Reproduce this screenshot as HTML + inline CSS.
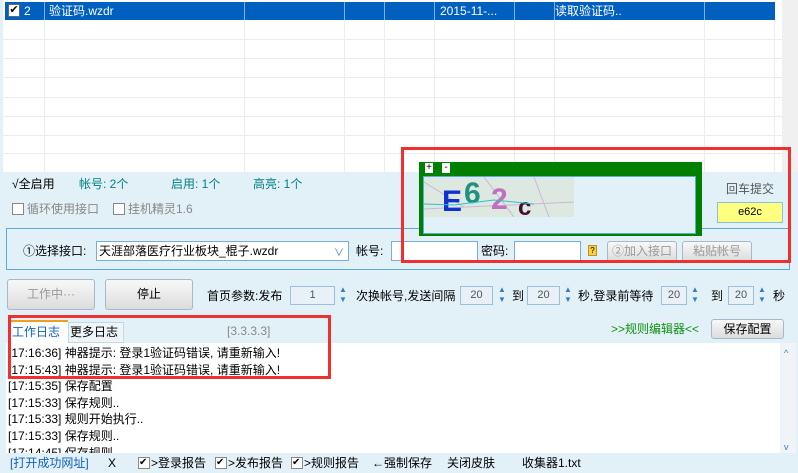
<!DOCTYPE html>
<html><head><meta charset="utf-8"><style>
*{margin:0;padding:0;box-sizing:border-box}
body{width:798px;height:473px;overflow:hidden;background:#e2f0f8;font-family:"Liberation Sans","Noto Sans CJK SC",sans-serif;font-size:12px;color:#000;position:relative}
.a{position:absolute;white-space:nowrap}
.t{font-size:12px;line-height:14px}
.chk{position:absolute;width:12px;height:12px;border:1px solid #888;background:#fff}
.btn{position:absolute;border:1px solid #a8b8c8;border-radius:3px;background:linear-gradient(#f8f8f8,#dcdcdc);text-align:center}
.inp{position:absolute;background:#fff;border:1px solid #7aaed8}
.spin{position:absolute;background:#e8f0f8;border:1px solid #9cc0dc;text-align:center;color:#555;font-size:11px;height:19px;line-height:17px}
.arr{position:absolute;width:10px;height:20px;color:#3a7ac0;font-size:8px;line-height:10px;text-align:center}
</style></head><body>
<!-- table -->
<div class="a" style="left:3px;top:0;width:779px;height:172px;background:#fff"></div>
<div class="a" style="left:5px;top:2px;width:770px;height:18px;background:#0060c0"></div>
<div class="a" style="left:782px;top:0;width:16px;height:172px;background:#f0f0f0"></div>
<div class="a" style="left:8px;top:4px;width:12px;height:13px;background:#fff;border:1px solid #666;font-size:11px;line-height:11px;text-align:center">✔</div>
<div class="a t" style="left:24px;top:4px;color:#fff">2</div>
<div class="a t" style="left:49px;top:4px;color:#fff">验证码.wzdr</div>
<div class="a t" style="left:440px;top:4px;color:#fff">2015-11-...</div>
<div class="a t" style="left:555px;top:4px;color:#fff">读取验证码..</div>
<svg class="a" style="left:0;top:0" width="798" height="172">
<g stroke="#ececec" stroke-width="1">
<line x1="44.5" y1="20" x2="44.5" y2="172"/><line x1="244.5" y1="20" x2="244.5" y2="172"/><line x1="344.5" y1="20" x2="344.5" y2="172"/><line x1="384.5" y1="20" x2="384.5" y2="172"/><line x1="434.5" y1="20" x2="434.5" y2="172"/><line x1="514.5" y1="20" x2="514.5" y2="172"/><line x1="554.5" y1="20" x2="554.5" y2="172"/><line x1="704.5" y1="20" x2="704.5" y2="172"/><line x1="774.5" y1="20" x2="774.5" y2="172"/>
<line x1="3" y1="39.5" x2="782" y2="39.5"/><line x1="3" y1="58.5" x2="782" y2="58.5"/><line x1="3" y1="77.5" x2="782" y2="77.5"/><line x1="3" y1="97.5" x2="782" y2="97.5"/><line x1="3" y1="116.5" x2="782" y2="116.5"/><line x1="3" y1="135.5" x2="782" y2="135.5"/><line x1="3" y1="153.5" x2="782" y2="153.5"/>
</g>
<g stroke="#fff" stroke-opacity=".5"><line x1="244.5" y1="2" x2="244.5" y2="20"/><line x1="344.5" y1="2" x2="344.5" y2="20"/><line x1="384.5" y1="2" x2="384.5" y2="20"/><line x1="434.5" y1="2" x2="434.5" y2="20"/><line x1="514.5" y1="2" x2="514.5" y2="20"/><line x1="554.5" y1="2" x2="554.5" y2="20"/><line x1="704.5" y1="2" x2="704.5" y2="20"/><line x1="44.5" y1="2" x2="44.5" y2="20"/></g>
</svg>
<!-- status -->
<div class="a t" style="left:12px;top:177px">√全启用</div>
<div class="a t" style="left:79px;top:177px;color:#008080">帐号: 2个</div>
<div class="a t" style="left:171px;top:177px;color:#008080">启用: 1个</div>
<div class="a t" style="left:253px;top:177px;color:#008080">高亮: 1个</div>
<div class="chk" style="left:12px;top:203px"></div><div class="a t" style="left:27px;top:202px;color:#888">循环使用接口</div>
<div class="chk" style="left:113px;top:203px"></div><div class="a t" style="left:128px;top:202px;color:#888">挂机精灵1.6</div>
<!-- group box -->
<div class="a" style="left:6px;top:228px;width:784px;height:42px;border:1px solid #5aaadc"></div>
<div class="a t" style="left:23px;top:244px">①选择接口:</div>
<div class="inp" style="left:96px;top:241px;width:253px;height:20px"></div>
<div class="a t" style="left:99px;top:244px">天涯部落医疗行业板块_棍子.wzdr</div>
<div class="a" style="left:334px;top:244px;color:#3a7ac0;font-size:10px">∨</div>
<div class="a t" style="left:356px;top:244px">帐号:</div>
<div class="inp" style="left:391px;top:241px;width:87px;height:20px"></div>
<div class="a t" style="left:481px;top:244px">密码:</div>
<div class="inp" style="left:514px;top:241px;width:67px;height:20px"></div>
<div class="a" style="left:588px;top:245px;width:9px;height:11px;background:#f8d040;border:1px solid #c09020;font-size:8px;line-height:9px;text-align:center">?</div>
<div class="btn t" style="left:607px;top:241px;width:70px;height:21px;line-height:19px;color:#999">②加入接口</div>
<div class="btn t" style="left:682px;top:241px;width:70px;height:21px;line-height:19px;color:#999">粘贴帐号</div>
<!-- captcha -->
<div class="a" style="left:419px;top:162px;width:283px;height:74px;background:#008000"></div>
<div class="a" style="left:425px;top:163px;width:8px;height:10px;background:#fff;font-size:10px;line-height:9px;text-align:center">+</div>
<div class="a" style="left:442px;top:163px;width:8px;height:10px;background:#fff;font-size:10px;line-height:9px;text-align:center">-</div>
<div class="a" style="left:423px;top:176px;width:273px;height:58px;background:#e2f0f8;border:1px solid #5aaadc"></div>
<svg class="a" style="left:424px;top:177px" width="150" height="40">
<rect width="150" height="40" fill="#dde8e0"/>
<path d="M0 5 L40 30 M60 0 L90 40 M110 0 L125 40 M0 32 L150 25" stroke="#c8b8d8" stroke-width="1"/>
<text x="18" y="34" font-family="Liberation Sans" font-weight="bold" font-size="30" fill="#1030d0">E</text>
<text x="40" y="26" font-family="Liberation Sans" font-weight="bold" font-size="30" fill="#209080">6</text>
<text x="67" y="32" font-family="Liberation Sans" font-weight="bold" font-size="30" fill="#c070c0">2</text>
<text x="94" y="38" font-family="Liberation Sans" font-weight="bold" font-size="24" fill="#401030">c</text>
<path d="M0 27 L30 28 L70 23 L110 27" stroke="#30c0d0" fill="none"/>
</svg>
<div class="a t" style="left:726px;top:182px;color:#555">回车提交</div>
<div class="a" style="left:717px;top:202px;width:66px;height:21px;background:#ffff80;border:1px solid #8ac0e0;font-size:11px;line-height:19px;text-align:center">e62c</div>
<div class="a" style="left:401px;top:147px;width:390px;height:116px;border:3px solid #f03030"></div>
<!-- buttons row -->
<div class="btn t" style="left:7px;top:279px;width:88px;height:31px;line-height:29px;color:#999">工作中···</div>
<div class="btn t" style="left:105px;top:279px;width:88px;height:31px;line-height:29px">停止</div>
<div class="a t" style="left:207px;top:289px">首页参数:发布</div>
<div class="spin" style="left:290px;top:286px;width:45px">1</div><div class="arr" style="left:338px;top:285px">▲<br>▼</div>
<div class="a t" style="left:356px;top:289px">次换帐号,发送间隔</div>
<div class="spin" style="left:460px;top:286px;width:33px">20</div><div class="arr" style="left:497px;top:285px">▲<br>▼</div>
<div class="a t" style="left:512px;top:289px">到</div>
<div class="spin" style="left:527px;top:286px;width:33px">20</div><div class="arr" style="left:563px;top:285px">▲<br>▼</div>
<div class="a t" style="left:578px;top:289px">秒,登录前等待</div>
<div class="spin" style="left:661px;top:286px;width:26px">20</div><div class="arr" style="left:690px;top:285px">▲<br>▼</div>
<div class="a t" style="left:711px;top:289px">到</div>
<div class="spin" style="left:728px;top:286px;width:26px">20</div><div class="arr" style="left:757px;top:285px">▲<br>▼</div>
<div class="a t" style="left:773px;top:289px">秒</div>
<!-- tabs -->
<div class="a" style="left:8px;top:320px;width:60px;height:23px;background:#fff;border-top:2px solid #f0a020;border-left:1px solid #c0d8e8"></div>
<div class="a t" style="left:12px;top:325px;color:#1060c0">工作日志</div>
<div class="a" style="left:68px;top:322px;width:56px;height:21px;background:#eef4f8;border:1px solid #c0d8e8"></div>
<div class="a t" style="left:70px;top:325px">更多日志</div>
<div class="a t" style="left:227px;top:324px;color:#888">[3.3.3.3]</div>
<div class="a t" style="left:611px;top:322px;color:#109010">&gt;&gt;规则编辑器&lt;&lt;</div>
<div class="btn t" style="left:711px;top:319px;width:73px;height:20px;line-height:18px">保存配置</div>
<!-- log -->
<div class="a" style="left:6px;top:343px;width:774px;height:110px;background:#fff"></div>
<div class="a" style="left:780px;top:343px;width:16px;height:110px;background:#f0f4f8"></div>
<div class="a" style="left:784px;top:348px;font-size:9px;color:#3a7ac0">^</div>
<div class="a" style="left:784px;top:442px;font-size:9px;color:#3a7ac0">v</div>
<div class="a" style="left:8px;top:345px;line-height:16.6px;font-size:12px">
[17:16:36] 神器提示: 登录1验证码错误, 请重新输入!<br>[17:15:43] 神器提示: 登录1验证码错误, 请重新输入!<br>[17:15:35] 保存配置<br>[17:15:33] 保存规则..<br>[17:15:33] 规则开始执行..<br>[17:15:33] 保存规则..<br>[17:14:45] 保存规则..</div>
<div class="a" style="left:8px;top:315px;width:323px;height:64px;border:3px solid #f03030"></div>
<!-- bottom -->
<div class="a" style="left:0;top:453px;width:798px;height:20px;background:#e2f0f8"></div>
<div class="a t" style="left:10px;top:456px;color:#1060c0">[打开成功网址]</div>
<div class="a t" style="left:108px;top:456px">X</div>
<div class="chk" style="left:138px;top:457px;font-size:10px;line-height:10px">✔</div><div class="a t" style="left:151px;top:456px">&gt;登录报告</div>
<div class="chk" style="left:215px;top:457px;font-size:10px;line-height:10px">✔</div><div class="a t" style="left:228px;top:456px">&gt;发布报告</div>
<div class="chk" style="left:291px;top:457px;font-size:10px;line-height:10px">✔</div><div class="a t" style="left:304px;top:456px">&gt;规则报告</div>
<div class="a t" style="left:372px;top:456px">←强制保存</div>
<div class="a t" style="left:447px;top:456px">关闭皮肤</div>
<div class="a t" style="left:522px;top:456px">收集器1.txt</div>
</body></html>
